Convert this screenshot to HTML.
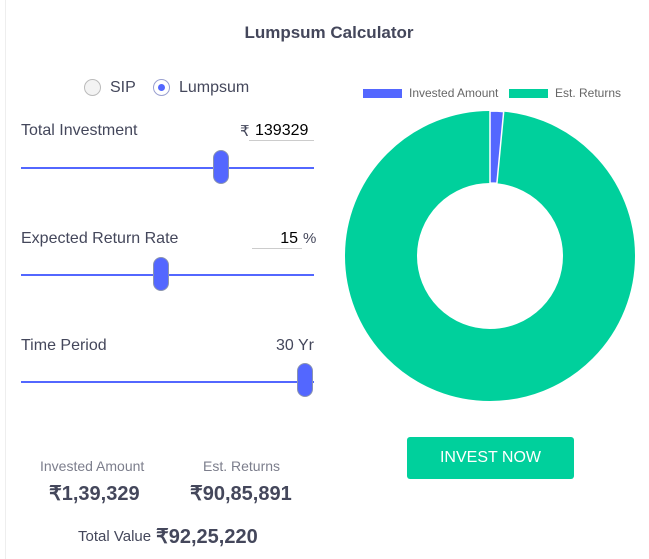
<!DOCTYPE html>
<html><head><style>
body{margin:0;width:649px;height:559px;background:#fff;font-family:"Liberation Sans",sans-serif;position:relative;overflow:hidden;color:#44475b}
.a{position:absolute}
.lbl{font-size:16px;color:#44475b}
.track{position:absolute;left:21px;width:293px;height:2px;background:#5367ff}
.thumb{position:absolute;width:16px;height:34px;border-radius:8px;background:#5367ff;border:1px solid #8a94b0;box-sizing:border-box}
.radio{position:absolute;width:17px;height:17px;border-radius:50%;box-sizing:border-box}
</style></head><body>
<div class="a" style="left:5px;top:0;width:1px;height:559px;background:#eee"></div>
<div class="a" style="left:0;width:658px;top:23px;text-align:center;font-size:17px;font-weight:bold;color:#44475b">Lumpsum Calculator</div>
<div class="radio" style="left:84px;top:79px;border:1px solid #bbb;background:#f3f3f3"></div>
<div class="a lbl" style="left:110px;top:79px">SIP</div>
<div class="radio" style="left:153px;top:79px;border:1px solid #9aa0d0;background:#fff"></div>
<div class="a" style="left:158px;top:84px;width:7px;height:7px;border-radius:50%;background:#5367ff"></div>
<div class="a lbl" style="left:179px;top:79px">Lumpsum</div>

<div class="a lbl" style="left:21px;top:122px">Total Investment</div>
<div class="a lbl" style="left:240px;top:122px;font-size:15px">₹</div>
<div class="a" style="left:249px;top:122px;width:65px;border-bottom:1px solid #ccc;font-size:16px;color:#000;padding-left:6px;box-sizing:border-box;height:19px">139329</div>
<div class="track" style="top:167px"></div>
<div class="thumb" style="left:213px;top:150px"></div>

<div class="a lbl" style="left:21px;top:230px">Expected Return Rate</div>
<div class="a" style="left:252px;top:230px;width:50px;border-bottom:1px solid #ccc;font-size:16px;color:#000;text-align:right;padding-right:4px;box-sizing:border-box;height:19px">15</div>
<div class="a lbl" style="left:303px;top:230px;font-size:15px">%</div>
<div class="track" style="top:274px"></div>
<div class="thumb" style="left:153px;top:257px"></div>

<div class="a lbl" style="left:21px;top:337px">Time Period</div>
<div class="a lbl" style="left:276px;top:337px">30 Yr</div>
<div class="track" style="top:381px"></div>
<div class="thumb" style="left:297px;top:363px"></div>

<div class="a" style="left:40px;top:458px;font-size:14px;color:#7c7e8c">Invested Amount</div>
<div class="a" style="left:203px;top:458px;font-size:14px;color:#7c7e8c">Est. Returns</div>
<div class="a" style="left:49px;top:481px;font-size:20px;font-weight:bold">₹1,39,329</div>
<div class="a" style="left:190px;top:481px;font-size:20px;font-weight:bold">₹90,85,891</div>
<div class="a" style="left:78px;top:528px;font-size:15px">Total Value</div>
<div class="a" style="left:156px;top:524px;font-size:20px;font-weight:bold">₹92,25,220</div>

<div class="a" style="left:363px;top:89px;width:39px;height:9px;background:#5367ff"></div>
<div class="a" style="left:409px;top:86px;font-size:12px;color:#666">Invested Amount</div>
<div class="a" style="left:509px;top:89px;width:39px;height:9px;background:#00d09c"></div>
<div class="a" style="left:555px;top:86px;font-size:12px;color:#666">Est. Returns</div>

<svg class="a" style="left:0;top:0" width="649" height="559">
<circle cx="490" cy="256" r="109" fill="none" stroke="#00d09c" stroke-width="72"/>
<path d="M490 111 A145 145 0 0 1 503.7 111.6 L496.9 183.3 A73 73 0 0 0 490 183 Z" fill="#5367ff" stroke="#fff" stroke-width="1.5"/>
</svg>

<div class="a" style="left:407px;top:437px;width:167px;height:42px;background:#00d09c;border-radius:3px;color:#fff;font-size:16px;text-align:center;line-height:42px">INVEST NOW</div>
</body></html>
